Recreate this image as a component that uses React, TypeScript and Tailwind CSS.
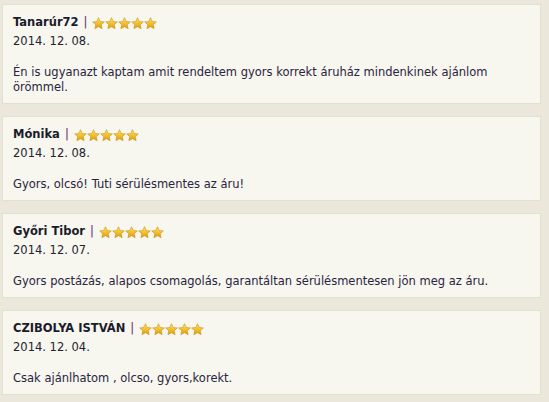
import React from "react";

type Review = { name: string; date: string; text: string };

const reviews: Review[] = [
  {
    name: "Tanarúr72",
    date: "2014. 12. 08.",
    text: "Én is ugyanazt kaptam amit rendeltem gyors korrekt áruház mindenkinek ajánlom örömmel.",
  },
  { name: "Mónika", date: "2014. 12. 08.", text: "Gyors, olcsó! Tuti sérülésmentes az áru!" },
  {
    name: "Győri Tibor",
    date: "2014. 12. 07.",
    text: "Gyors postázás, alapos csomagolás, garantáltan sérülésmentesen jön meg az áru.",
  },
  { name: "CZIBOLYA ISTVÁN", date: "2014. 12. 04.", text: "Csak ajánlhatom , olcso, gyors,korekt." },
];

function Star() {
  return (
    <svg width="13" height="13" viewBox="0 0 24 24" className="block">
      <defs>
        <linearGradient id="sg" x1="0" y1="0" x2="0" y2="1">
          <stop offset="0" stopColor="#fbe27a" />
          <stop offset="0.55" stopColor="#f1bd2a" />
          <stop offset="1" stopColor="#d99a12" />
        </linearGradient>
      </defs>
      <path
        d="M12 1.2l3.2 7 7.6.8-5.7 5.1 1.6 7.5L12 17.8l-6.7 3.8 1.6-7.5L1.2 9l7.6-.8z"
        fill="url(#sg)"
        stroke="#c98d10"
        strokeWidth="1"
        strokeLinejoin="round"
      />
    </svg>
  );
}

function ReviewCard({ r }: { r: Review }) {
  return (
    <div className="mb-3 w-[539px] border border-[#e3dfd1] bg-[#f7f6ef] pb-2 pl-[10px] pr-3 pt-[10px]">
      <div className="flex h-4 items-center text-[11.5px]">
        <span className="font-bold text-[#1b1b2b]">{r.name}</span>
        <span className="ml-[5px] text-[#6a1f6e]">|</span>
        <span className="ml-[5px] flex">
          {[0, 1, 2, 3, 4].map((i) => (
            <Star key={i} />
          ))}
        </span>
      </div>
      <div className="mt-[2px] text-[11.5px] leading-4 text-[#222230]">{r.date}</div>
      <p className="mt-4 text-[11.5px] leading-[15px] text-[#2a2440]">{r.text}</p>
    </div>
  );
}

export default function App() {
  return (
    <div
      className="min-h-[402px] w-[549px] bg-[#ebe7da] pl-[2px] pt-1"
      style={{ fontFamily: '"DejaVu Sans", Verdana, sans-serif' }}
    >
      {reviews.map((r) => (
        <ReviewCard key={r.name} r={r} />
      ))}
    </div>
  );
}
